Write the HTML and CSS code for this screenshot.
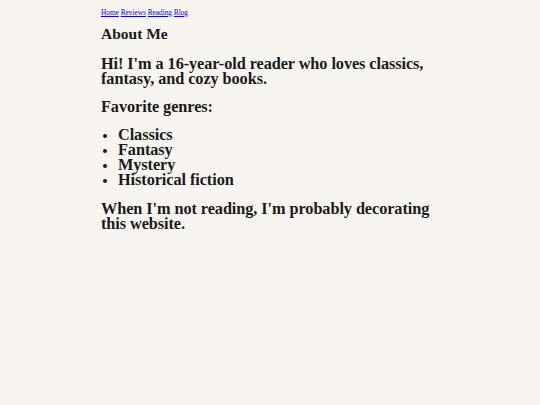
FILE: index.html
```html
<!DOCTYPE html>
<html>
<head>
<meta charset="utf-8">
<link rel="stylesheet" href="styles.css">
</head>
<body>
<div class="page">
  <nav class="nav"><a href="#">Home</a> <a href="#">Reviews</a> <a href="#">Reading</a> <a href="#">Blog</a></nav>
  <h1 class="title">About Me</h1>
  <p class="text">Hi! I'm a 16-year-old reader who loves classics, fantasy, and cozy books.</p>
  <p class="text">Favorite genres:</p>
  <ul class="list">
    <li>Classics</li>
    <li>Fantasy</li>
    <li>Mystery</li>
    <li>Historical fiction</li>
  </ul>
  <p class="text">When I'm not reading, I'm probably decorating this website.</p>
</div>
</body>
</html>
```
FILE: styles.css
```css
html, body {
  margin: 0;
  padding: 0;
  background: #f8f5f0;
}
.page {
  width: 339px;
  margin: 0 auto;
  padding-top: 8px;
  padding-left: 1px;
  font-family: "Liberation Serif", serif;
  color: #1a1a1a;
}
.nav {
  font-size: 7.3px;
  line-height: 10px;
}
.nav a {
  color: #0000ee;
}
.title, .text, .list {
  font-size: 16.3px;
  line-height: 15px;
  font-weight: bold;
  letter-spacing: -0.08px;
  margin: 13px 0;
}
.title {
  font-size: 15.5px;
  letter-spacing: 0;
  margin-top: 8px;
  margin-bottom: 15px;
}
.list {
  padding-left: 17px;
  margin-bottom: 14px;
}
.list li::marker {
  font-size: 13px;
}
```
